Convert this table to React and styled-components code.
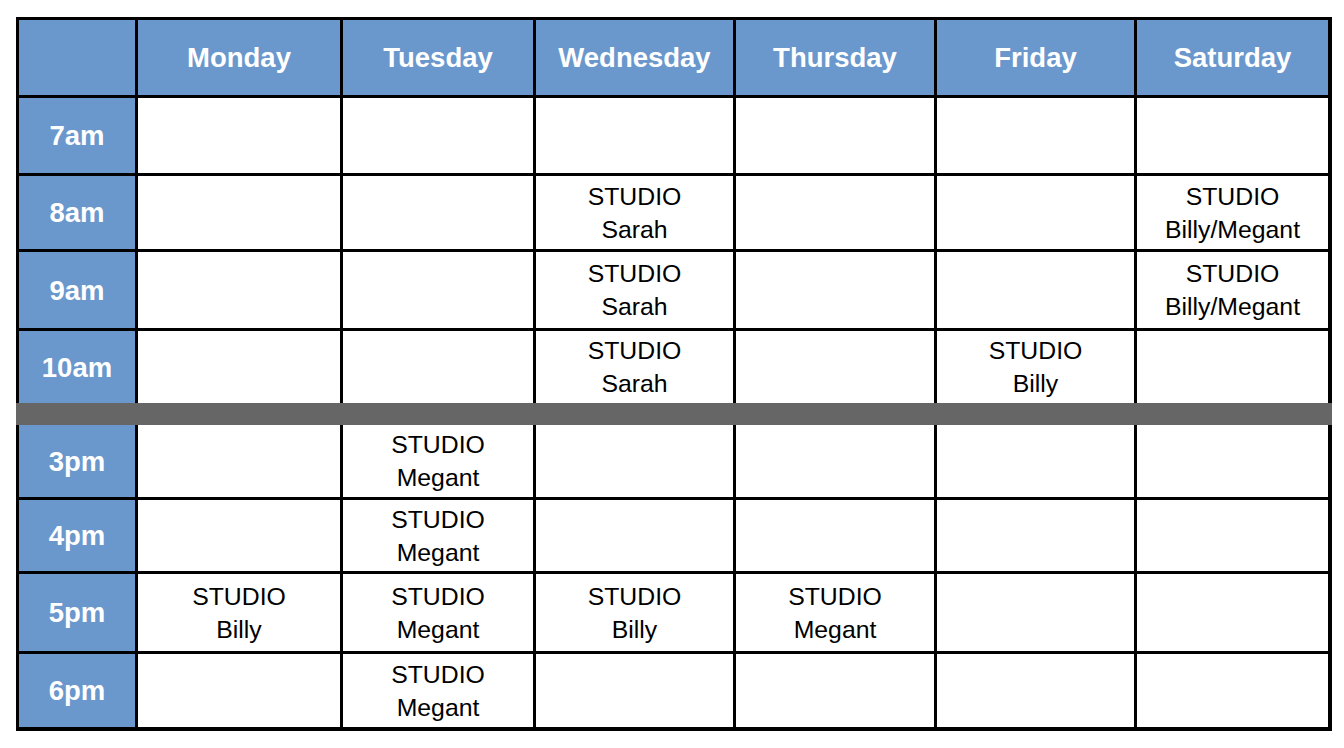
import React from "react";
import styled, { createGlobalStyle } from "styled-components";

const GlobalStyle = createGlobalStyle`
  body {
    margin: 0;
    background: #ffffff;
    font-family: "Liberation Sans", Arial, sans-serif;
  }
`;

const Page = styled.div`
  padding: 17px 0 0 16px;
`;

const Grid = styled.div`
  display: grid;
  grid-template-columns: 116px 202px 190px 197px 198px 197px 191px;
  grid-template-rows: 75px 75px 73px 76px 72px 16px 72px 71px 77px 73px;
  gap: 3px;
  width: max-content;
  padding: 3px 4px 4px 3px;
  background: #000000;
`;

const HeadCell = styled.div`
  display: flex;
  align-items: center;
  justify-content: center;
  padding-top: 1px;
  background: #6a98cd;
  color: #ffffff;
  font-weight: bold;
  font-size: 27.5px;
`;

const Cell = styled.div`
  display: flex;
  flex-direction: column;
  align-items: center;
  justify-content: center;
  background: #ffffff;
  color: #000000;
  font-size: 24.8px;
  line-height: 33px;
  text-align: center;
`;

const Break = styled.div`
  grid-column: 1 / -1;
  margin: -3px -4px -3px -3px;
  background: #666666;
`;

const days = ["Monday", "Tuesday", "Wednesday", "Thursday", "Friday", "Saturday"];

const morning = [
  { time: "7am", slots: {} },
  { time: "8am", slots: { Wednesday: "Sarah", Saturday: "Billy/Megant" } },
  { time: "9am", slots: { Wednesday: "Sarah", Saturday: "Billy/Megant" } },
  { time: "10am", slots: { Wednesday: "Sarah", Friday: "Billy" } },
];

const evening = [
  { time: "3pm", slots: { Tuesday: "Megant" } },
  { time: "4pm", slots: { Tuesday: "Megant" } },
  {
    time: "5pm",
    slots: { Monday: "Billy", Tuesday: "Megant", Wednesday: "Billy", Thursday: "Megant" },
  },
  { time: "6pm", slots: { Tuesday: "Megant" } },
];

function Row({ row }) {
  return (
    <>
      <HeadCell>{row.time}</HeadCell>
      {days.map((d) => (
        <Cell key={d}>
          {row.slots[d] && (
            <>
              <span>STUDIO</span>
              <span>{row.slots[d]}</span>
            </>
          )}
        </Cell>
      ))}
    </>
  );
}

export default function App() {
  return (
    <>
      <GlobalStyle />
      <Page>
        <Grid>
          <HeadCell />
          {days.map((d) => (
            <HeadCell key={d}>{d}</HeadCell>
          ))}
          {morning.map((r) => (
            <Row key={r.time} row={r} />
          ))}
          <Break />
          {evening.map((r) => (
            <Row key={r.time} row={r} />
          ))}
        </Grid>
      </Page>
    </>
  );
}
